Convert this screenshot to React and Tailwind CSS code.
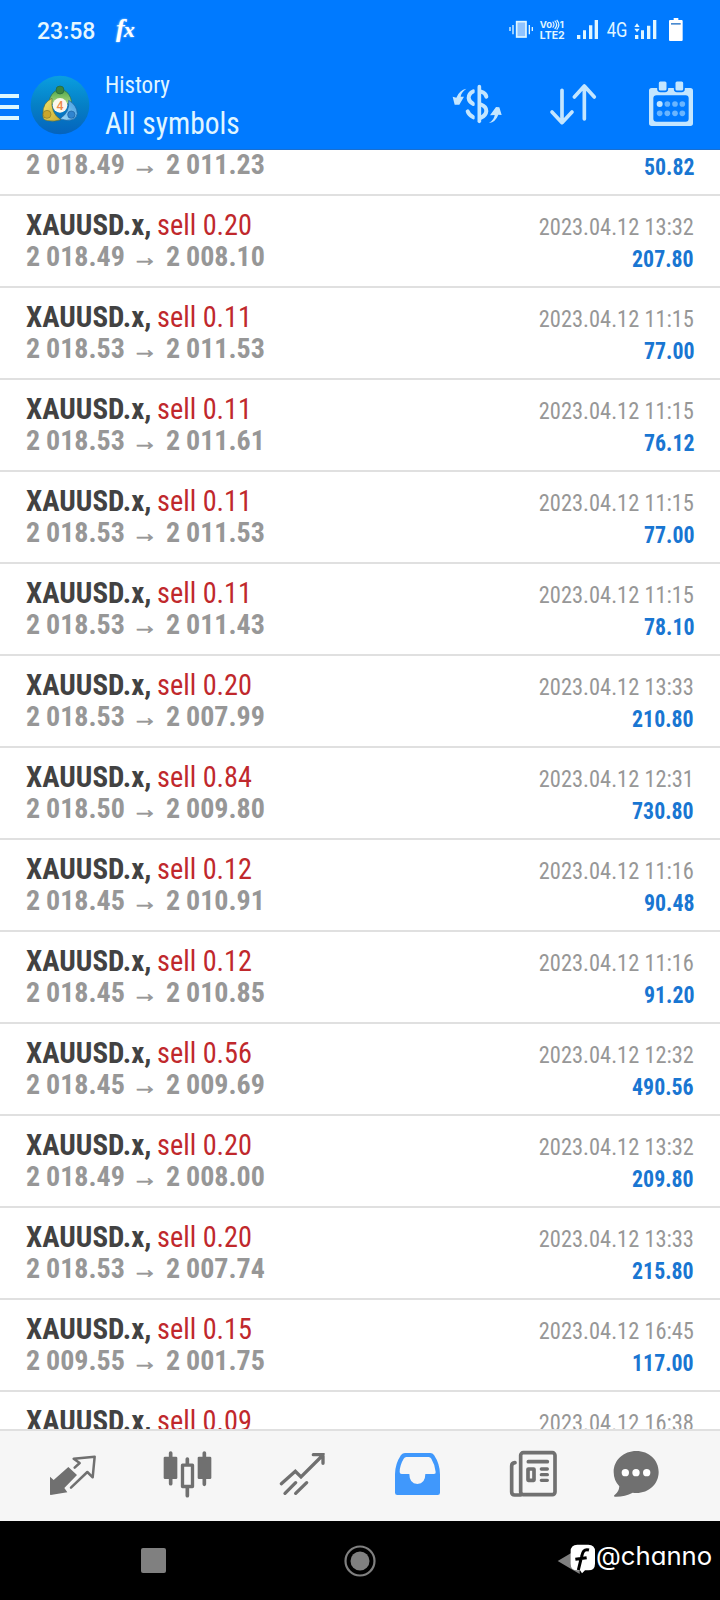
import React from 'react';

const deals = [
  { lot: '0.20', open: '018.49', close: '008.10', date: '2023.04.12 13:32', profit: '207.80' },
  { lot: '0.11', open: '018.53', close: '011.53', date: '2023.04.12 11:15', profit: '77.00' },
  { lot: '0.11', open: '018.53', close: '011.61', date: '2023.04.12 11:15', profit: '76.12' },
  { lot: '0.11', open: '018.53', close: '011.53', date: '2023.04.12 11:15', profit: '77.00' },
  { lot: '0.11', open: '018.53', close: '011.43', date: '2023.04.12 11:15', profit: '78.10' },
  { lot: '0.20', open: '018.53', close: '007.99', date: '2023.04.12 13:33', profit: '210.80' },
  { lot: '0.84', open: '018.50', close: '009.80', date: '2023.04.12 12:31', profit: '730.80' },
  { lot: '0.12', open: '018.45', close: '010.91', date: '2023.04.12 11:16', profit: '90.48' },
  { lot: '0.12', open: '018.45', close: '010.85', date: '2023.04.12 11:16', profit: '91.20' },
  { lot: '0.56', open: '018.45', close: '009.69', date: '2023.04.12 12:32', profit: '490.56' },
  { lot: '0.20', open: '018.49', close: '008.00', date: '2023.04.12 13:32', profit: '209.80' },
  { lot: '0.20', open: '018.53', close: '007.74', date: '2023.04.12 13:33', profit: '215.80' },
  { lot: '0.15', open: '009.55', close: '001.75', date: '2023.04.12 16:45', profit: '117.00' },
];

const StatusBar = () => (
  <div className="flex h-[60px] items-start text-[#e6f7ff]">
    <span className="ml-[37px] mt-[16px] w-[79px] font-['Roboto'] text-[23px] leading-[32px] font-medium">23:58</span>
    <span className="mt-[14px] font-['Liberation_Serif'] text-[26px] leading-[30px] font-bold italic text-white [text-shadow:0_0_2px_#bfe4ff]">
      f<span className="-ml-[1px] text-[22px]">x</span>
    </span>
    <svg className="ml-auto mr-[35px] mt-[15px] shrink-0" width="178" height="30" viewBox="0 0 534 90" fill="#e0f6ff">
      {/* vibrate */}
      <path d="M7 36h4v12H7zM16 30h4v28h-4zM65 30h4v28h-4zM74 36h4v12H74z" />
      <rect x="29" y="20" width="28" height="46" fill="#8fc3ff" stroke="#e0f6ff" strokeWidth="5" />
      {/* volte */}
      <text x="98" y="39" fontSize="28" fontWeight="700" fontFamily="Inter" textLength="37" lengthAdjust="spacingAndGlyphs">Vo</text>
      <path d="M137 20q8 9 0 18M143 17q12 12 0 25M149 15q13 14 0 29" fill="none" stroke="#e0f6ff" strokeWidth="3.500" />
      <text x="158" y="38" fontSize="28" fontWeight="700" fontFamily="Inter">1</text>
      <text x="98" y="72" fontSize="31" fontWeight="700" fontFamily="Inter" textLength="75" lengthAdjust="spacingAndGlyphs">LTE2</text>
      {/* sim 1 */}
      <path d="M210 60h10v12h-10zM228 46h9v26h-9zM246 31h10v41h-10zM263 15h10v57h-10z" />
      <text x="299" y="66" fontSize="60" fontWeight="400" fontFamily="Roboto" textLength="62" lengthAdjust="spacingAndGlyphs">4G</text>
      {/* sim 2 */}
      <path d="M382 36l8-11 8 11zM382 41l8 11 8-11zM384 60h10v12h-10zM402 46h9v26h-9zM420 32h10v40h-10zM438 15h10v57h-10z" />
      {/* battery */}
      <path d="M500 9h14v6h10q3 0 3 3v57q0 3-3 3h-35q-3 0-3-3V18q0-3 3-3h11z" fill="#fff" />
      <path d="M492 24h29v5h-29z" fill="#4a8ad0" />
    </svg>
  </div>
);

const Logo = () => (
  <svg className="ml-[11px] shrink-0" width="60" height="60" viewBox="0 0 180 180">
    <defs>
      <linearGradient id="sea" x1="0" y1="0" x2="0" y2="1">
        <stop offset="0" stopColor="#0a9fe0" />
        <stop offset="0.5" stopColor="#0580c6" />
        <stop offset="1" stopColor="#0563bd" />
      </linearGradient>
      <linearGradient id="green" x1="0" y1="0" x2="0" y2="1"><stop offset="0" stopColor="#4fa548" /><stop offset="1" stopColor="#b4de86" /></linearGradient>
      <linearGradient id="gold" x1="0" y1="0" x2="1" y2="1"><stop offset="0" stopColor="#f0e46e" /><stop offset="1" stopColor="#c9ab32" /></linearGradient>
      <linearGradient id="blue" x1="1" y1="0" x2="0" y2="1"><stop offset="0" stopColor="#3c9be0" /><stop offset="1" stopColor="#a3dbf8" /></linearGradient>
    </defs>
    <circle cx="90" cy="90" r="88" fill="url(#sea)" />
    <path d="M57 92q-2-26 16-42 18-12 36 0 17 14 16 42-34-22-68 0z" fill="url(#green)" stroke="#2a6d4a" strokeWidth="2" />
    <path d="M66 70q-29 14-27 46-4 18 14 21 20 4 40-3-32-18-27-64z" fill="url(#gold)" stroke="#5c6e3a" strokeWidth="2" />
    <path d="M116 76q25 14 26 40-2 14-16 18-16 5-36-3 30-18 26-55z" fill="url(#blue)" stroke="#1b5f9e" strokeWidth="2" />
    <circle cx="90" cy="45" r="12" fill="#3b8540" stroke="#1f6440" strokeWidth="2" />
    <circle cx="51" cy="118" r="12" fill="#c9a62d" stroke="#8a7a2c" strokeWidth="2" />
    <circle cx="124" cy="119" r="11" fill="#2f84cf" stroke="#1b5f9e" strokeWidth="2" />
    <circle cx="90" cy="91" r="22" fill="#fbf7ee" />
    <text x="90" y="104" textAnchor="middle" fontSize="37" fontWeight="500" fontFamily="Roboto" fill="#ef8a4a">4</text>
  </svg>
);

const Header = () => (
  <header className="flex h-[90px] items-center text-[#e0f6ff]">
    <div className="flex w-[19px] flex-col gap-[7px] pt-[3px]">
      <i className="h-[4px] bg-[#dcf8ff]" />
      <i className="h-[4px] bg-[#dcf8ff]" />
      <i className="h-[4px] bg-[#dcf8ff]" />
    </div>
    <Logo />
    <div className="ml-[15px] flex flex-1 flex-col items-start pt-[3px]">
      <span className="text-[23px] leading-[34px]">History</span>
      <span className="origin-left scale-x-[0.935] text-[31.5px] leading-[42px] whitespace-nowrap">All symbols</span>
    </div>
    {/* currency */}
    <svg className="mr-[36px] shrink-0" width="60" height="60" viewBox="50 45 180 180" fill="#c4e6ff">
      <path d="M108 86q-16 12-17 24l10 0-14 24-14 0-6-24 11 3q9-23 30-27z" />
      <path d="M176 189q16-10 17-24l-14 1 18-25 10 1 7 23-10-1q-8 22-28 25z" />
      <path d="M147 80v104" stroke="#c4e6ff" strokeWidth="11" strokeLinecap="round" />
      <path d="M129 94q-14 6-14 20 1 11 14 18M112 154q3 11 17 18M152 95q14 4 16 15M152 134q16 6 16 19-1 13-16 20" fill="none" stroke="#c4e6ff" strokeWidth="12" strokeLinecap="round" />
      <path d="M136 82v105" stroke="#007aff" strokeWidth="6" />
    </svg>
    {/* sort */}
    <svg className="mr-[38px] shrink-0" width="60" height="60" viewBox="342 45 180 180" fill="none" stroke="#c4e6ff" strokeWidth="11" strokeLinecap="round" strokeLinejoin="round">
      <path d="M399 91v96M369 156l30 32 30-32M466 177V81M436 111l30-33 30 33" />
    </svg>
    {/* calendar */}
    <svg className="mr-[19px] shrink-0" width="60" height="60" viewBox="633 45 180 180" fill="#c4e6ff">
      <path fillRule="evenodd" d="M665 84h116q8 0 8 8v98q0 8-8 8H665q-8 0-8-8V92q0-8 8-8zM680 106q-10 0-10 9v61q0 9 10 9h87q9 0 9-9v-61q0-9-9-9z" />
      <rect x="684" y="62" width="28" height="32" rx="7" stroke="#007aff" strokeWidth="5" />
      <rect x="734" y="62" width="28" height="32" rx="7" stroke="#007aff" strokeWidth="5" />
      <circle cx="689" cy="132" r="9" />
      <g fill="#69b5ff">
        <circle cx="712" cy="132" r="8.500" /><circle cx="735" cy="132" r="8.500" /><circle cx="757" cy="132" r="8.500" />
        <circle cx="689" cy="160" r="8.500" /><circle cx="712" cy="160" r="8.500" /><circle cx="735" cy="160" r="8.500" /><circle cx="757" cy="160" r="8.500" />
      </g>
    </svg>
  </header>
);

const Prices = ({ open, close }) => (
  <div className="flex text-[28px] leading-[32px] font-bold text-[#979797]">
    <span className="w-[20px]">2</span>
    <span className="w-[86px]">{open}</span>
    <span className="w-[34px] text-[26px] font-normal [-webkit-text-stroke:0.7px_#979797]">→</span>
    <span className="w-[20px]">2</span>
    <span>{close}</span>
  </div>
);

const Profit = ({ value }) => (
  <b className="origin-right scale-x-[0.91] text-[24px] leading-[32px] text-[#1976d2]">{value}</b>
);

const DealRow = ({ deal }) => (
  <li className="flex h-[92px] justify-between border-b-2 border-[#e0e0e0] px-[26px] whitespace-nowrap">
    <div className="pt-[13px]">
      <div className="flex text-[29px] leading-[32px]">
        <b className="w-[131px] text-[#424242]">XAUUSD.x,</b>
        <span className="origin-left scale-x-[0.975] text-[#c0282c]">sell {deal.lot}</span>
      </div>
      <Prices open={deal.open} close={deal.close} />
    </div>
    <div className="flex flex-col items-end pt-[15px]">
      <span className="origin-right scale-x-[0.935] text-[24px] leading-[32px] text-[#979797]">{deal.date}</span>
      <Profit value={deal.profit} />
    </div>
  </li>
);

const TabBar = () => (
  <nav className="flex h-[92px] shrink-0 border-t-2 border-[#e0e0e0] bg-[#f6f6f6] pt-[16px]">
    {/* trade */}
    <svg className="ml-[42px] shrink-0" width="60" height="60" viewBox="126 201 180 180" fill="#707070">
      <path d="M205 261l26 24-38 39 9 13-50 8q-2 0-2-2v-53l11 10z" />
      <path d="M224 263l15-14-18-13 63-6-6 62-16-16-49 47" fill="none" stroke="#707070" strokeWidth="7.500" strokeLinejoin="round" strokeLinecap="round" />
    </svg>
    {/* chart */}
    <svg className="ml-[56px] shrink-0" width="60" height="60" viewBox="474 201 180 180" fill="#707070">
      <path d="M512 219v92M613 219v94M562 237v14M562 322v25" stroke="#707070" strokeWidth="11" strokeLinecap="round" />
      <rect x="491" y="230" width="41" height="67" rx="4" />
      <rect x="593" y="230" width="41" height="67" rx="4" />
      <rect x="547.500" y="255.500" width="30" height="64" fill="#f6f6f6" stroke="#707070" strokeWidth="10" strokeLinejoin="round" />
    </svg>
    {/* signals */}
    <svg className="ml-[54px] shrink-0" width="60" height="60" viewBox="816 201 180 180" fill="none" stroke="#707070" strokeWidth="10" strokeLinecap="round">
      <path d="M844 311l42-37 17 17 66-66M940 224h29v26M855 340l32-32M887 340l33-32" />
    </svg>
    {/* history */}
    <svg className="ml-[56px] shrink-0" width="60" height="60" viewBox="84 201 180 180" fill="#4098fc">
      <path fillRule="evenodd" d="M135 219h76q7 0 11 6 18 27 18 58v55q0 7-7 7H112q-7 0-7-7v-55q0-31 18-58 5-6 12-6zM139 231q-5 0-8 5-12 20-12 40 0 6 6 6h23q0 29 24 30 24-1 24-30h26q6 0 5-6-1-20-13-40-3-5-8-5z" />
    </svg>
    {/* news */}
    <svg className="ml-[55px] shrink-0" width="60" height="60" viewBox="429 201 180 180" fill="none" stroke="#707070" strokeWidth="11" strokeLinecap="round">
      <rect x="482" y="218" width="103" height="126" rx="8" />
      <path d="M482 345h-18q-9 0-9-9v-78q0-9 10-10" />
      <path d="M505 245h57" />
      <path d="M544 267h18M544 284h18M544 301h18" strokeWidth="10" />
      <rect x="504" y="267" width="18" height="34" rx="1" />
    </svg>
    {/* chat */}
    <svg className="ml-[43px] shrink-0" width="60" height="60" viewBox="738 201 180 180" fill="#707070">
      <path d="M829 213c38 0 67 27 67 63s-29 63-67 63q-5 0-11-1-24 13-54 12-4-1-1-4 14-10 15-27-17-18-17-43c0-36 30-63 68-63z" />
      <g fill="#fff"><circle cx="796" cy="278" r="11" /><circle cx="828" cy="278" r="11" /><circle cx="860" cy="278" r="11" /></g>
    </svg>
  </nav>
);

const SystemNav = () => (
  <div className="flex h-[79px] items-center bg-black">
    <div className="ml-[141px] size-[25px] rounded-[2px] bg-[#808080]" />
    <svg className="ml-[178px] shrink-0" width="32" height="32" viewBox="0 0 32 32">
      <circle cx="16" cy="16" r="14.500" fill="none" stroke="#808080" strokeWidth="2.200" />
      <circle cx="16" cy="16" r="9.500" fill="#808080" />
    </svg>
    <svg className="-mt-[6px] ml-[180px] shrink-0" width="40" height="32" viewBox="586 484 120 96">
      <path d="M591 541l66-39v78z" fill="#808080" />
      <path d="M650 492h33q20 0 20 20v37q0 20-20 20h-10l-9 9-6-9h-8q-20 0-20-20v-37q0-20 20-20z" fill="#fff" />
      <path d="M685 508c-15-4-19 5-22 19l-10 41M644 536l34-5" fill="none" stroke="#000" strokeWidth="9" />
    </svg>
    <span className="-mt-[10px] font-['Inter'] text-[25.7px] leading-[32px] text-white [font-feature-settings:'cv11']">@channo</span>
  </div>
);

const App = () => (
  <div className="flex h-[1600px] w-[720px] flex-col overflow-hidden bg-white font-['Roboto_Condensed','Roboto',sans-serif]">
    <div className="h-[150px] shrink-0 border-b border-[#1a6fd0] bg-[#007aff]">
      <StatusBar />
      <Header />
    </div>
    <ul className="h-[1279px] shrink-0 overflow-hidden">
      {/* row scrolled halfway under the header */}
      <li className="flex h-[46px] items-start justify-between border-b-2 border-[#e0e0e0] px-[26px]">
        <div className="-mt-[1px]">
          <Prices open="018.49" close="011.23" />
        </div>
        <div className="flex pt-[1px]">
          <Profit value="50.82" />
        </div>
      </li>
      {deals.map((deal, i) => (
        <DealRow key={i} deal={deal} />
      ))}
      {/* last row runs under the tab bar */}
      <li className="flex justify-between px-[26px] whitespace-nowrap">
        <div className="flex pt-[13px] text-[29px] leading-[32px]">
          <b className="w-[131px] text-[#424242]">XAUUSD.x,</b>
          <span className="origin-left scale-x-[0.975] text-[#c0282c]">sell 0.09</span>
        </div>
        <span className="origin-right scale-x-[0.935] pt-[15px] text-[24px] leading-[32px] text-[#979797]">2023.04.12 16:38</span>
      </li>
    </ul>
    <TabBar />
    <SystemNav />
  </div>
);

export default App;
